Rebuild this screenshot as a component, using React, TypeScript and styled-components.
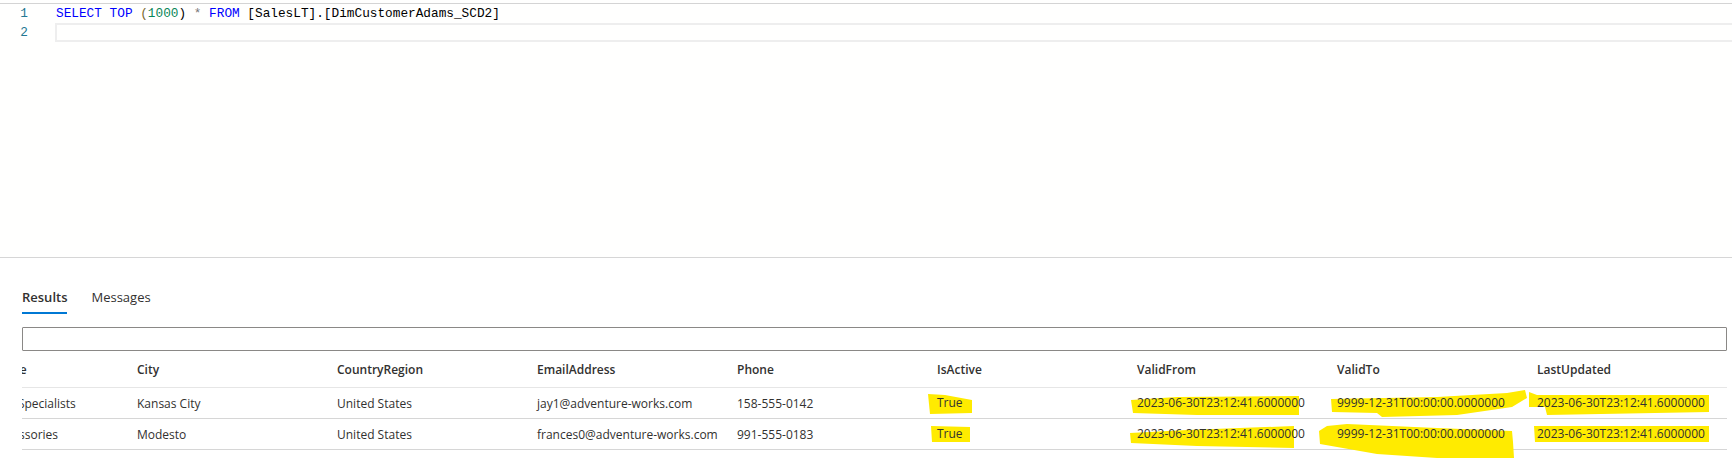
import React from "react";
import styled, { createGlobalStyle } from "styled-components";

const GlobalStyle = createGlobalStyle`
  html, body { margin: 0; padding: 0; background: #ffffff; }
  body { font-family: "Open Sans", "Noto Sans", "Liberation Sans", sans-serif; color: #323130; overflow: hidden; }
`;

const Page = styled.div`
  width: 1732px;
  height: 458px;
  display: flex;
  flex-direction: column;
  background: #ffffff;
`;

/* ---------- Editor ---------- */
const Editor = styled.div`
  height: 257px;
  padding-top: 3px;
  box-sizing: border-box;
  background: #fffffe;
  display: flex;
  flex-direction: column;
`;

const EditorRule = styled.div`
  height: 1px;
  background: #d4d4d4;
`;

const CodeLine = styled.div`
  display: flex;
  height: 19px;
  align-items: stretch;
`;

const LineNo = styled.div`
  width: 55px;
  box-sizing: border-box;
  padding-right: 27px;
  text-align: right;
  font-family: "Liberation Mono", "DejaVu Sans Mono", monospace;
  font-size: 12.75px;
  line-height: 19px;
  color: #237893;
`;

const CodeText = styled.div<{ $current?: boolean }>`
  flex: 1;
  box-sizing: border-box;
  padding-left: 1px;
  font-family: "Liberation Mono", "DejaVu Sans Mono", monospace;
  font-size: 12.75px;
  line-height: ${(p) => (p.$current ? "15px" : "19px")};
  white-space: pre;
  color: #000000;
  border: ${(p) => (p.$current ? "2px solid #eeeeee" : "none")};
  border-right: none;
`;

const Tok = styled.span<{ $kind: "kw" | "num" | "op" | "paren" | "plain" }>`
  color: ${(p) =>
    p.$kind === "kw"
      ? "#0000ff"
      : p.$kind === "num"
      ? "#098658"
      : p.$kind === "op"
      ? "#777777"
      : p.$kind === "paren"
      ? "#7a6a2e"
      : "#000000"};
`;

const Divider = styled.div`
  height: 1px;
  background: #d6d6d6;
`;

/* ---------- Results ---------- */
const Results = styled.div`
  flex: 1;
  display: flex;
  flex-direction: column;
  padding-left: 22px;
  padding-right: 5px;
  min-height: 0;
`;

const Tabs = styled.div`
  display: flex;
  gap: 24px;
  margin-top: 30px;
`;

const Tab = styled.div<{ $active?: boolean }>`
  font-size: 13px;
  line-height: 18px;
  font-weight: ${(p) => (p.$active ? 600 : 400)};
  color: #323130;
  padding-bottom: 6px;
  border-bottom: 2px solid ${(p) => (p.$active ? "#0078d4" : "transparent")};
`;

const FilterBox = styled.div`
  margin-top: 13px;
  height: 24px;
  box-sizing: border-box;
  border: 1px solid #8a8886;
  border-radius: 1px;
`;

const GridViewport = styled.div`
  overflow-x: clip;
  overflow-y: visible;
`;

const GridInner = styled.div`
  margin-left: -93px;
  width: 1800px;
`;

const Row = styled.div<{ $header?: boolean }>`
  display: grid;
  grid-template-columns: repeat(9, 200px);
  height: ${(p) => (p.$header ? "37px" : "31px")};
  box-sizing: border-box;
  border-bottom: 1px solid ${(p) => (p.$header ? "#e6e6e6" : "#d6d6d6")};
`;

const Cell = styled.div<{ $header?: boolean }>`
  display: flex;
  align-items: center;
  padding-left: 8px;
  white-space: pre;
  font-size: 12px;
  font-weight: ${(p) => (p.$header ? 600 : 400)};
  color: #323130;
  position: relative;
`;

const Mark = styled.span`
  position: relative;
  display: inline-block;
  isolation: isolate;
  line-height: 16px;
`;

const MarkShape = styled.svg`
  position: absolute;
  left: 0;
  top: 50%;
  width: 1px;
  height: 1px;
  overflow: visible;
  z-index: -1;
  pointer-events: none;
`;

type Pt = [number, number];

const Highlight: React.FC<{ pts: Pt[]; children: React.ReactNode }> = ({ pts, children }) => (
  <Mark>
    <MarkShape>
      <polygon points={pts.map((p) => p.join(",")).join(" ")} fill="#ffeb00" />
    </MarkShape>
    {children}
  </Mark>
);

const headers = [
  "CompanyName",
  "City",
  "CountryRegion",
  "EmailAddress",
  "Phone",
  "IsActive",
  "ValidFrom",
  "ValidTo",
  "LastUpdated",
];

type RowData = {
  company: string;
  city: string;
  country: string;
  email: string;
  phone: string;
  marks: { active: Pt[]; from: Pt[]; to: Pt[]; updated: Pt[] };
};

const rows: RowData[] = [
  {
    company: "Valley Bicycle\u2009\u2009 Specialists",
    city: "Kansas City",
    country: "United States",
    email: "jay1@adventure-works.com",
    phone: "158-555-0142",
    marks: {
      active: [[-9, -9], [8, -8], [35, -3], [35, 10], [-7, 11]],
      from: [[-6, -3], [40, -6], [162, -7], [162, 12], [60, 12], [-4, 10]],
      to: [[-6, -4], [100, -6], [170, -10], [188, -13], [190, -5], [175, 4], [120, 12], [45, 14], [40, 10], [-5, 9]],
      updated: [[-8, -11], [0, -8], [172, -8], [172, 9], [10, 12], [8, 4], [-8, 4]],
    },
  },
  {
    company: "Tour Bike Accessories",
    city: "Modesto",
    country: "United States",
    email: "frances0@adventure-works.com",
    phone: "991-555-0183",
    marks: {
      active: [[-6, -8], [33, -7], [33, 8], [-5, 8]],
      from: [[-7, -1], [50, -4], [157, -8], [157, 14], [60, 12], [-6, 9]],
      to: [[-18, -3], [-10, -8], [10, -10], [100, -6], [175, -3], [176, 8], [177, 24], [100, 24], [40, 20], [-17, 10]],
      updated: [[-3, -8], [172, -8], [172, 8], [-2, 8]],
    },
  },
];

const VALID_FROM = "2023-06-30T23:12:41.6000000";
const VALID_TO = "9999-12-31T00:00:00.0000000";

export default function App() {
  return (
    <Page>
      <GlobalStyle />
      <Editor>
        <EditorRule />
        <CodeLine>
          <LineNo>1</LineNo>
          <CodeText>
            <Tok $kind="kw">SELECT</Tok> <Tok $kind="kw">TOP</Tok> <Tok $kind="paren">(</Tok>
            <Tok $kind="num">1000</Tok>
            <Tok $kind="plain">)</Tok> <Tok $kind="op">*</Tok> <Tok $kind="kw">FROM</Tok>{" "}
            <Tok $kind="plain">[SalesLT].[DimCustomerAdams_SCD2]</Tok>
          </CodeText>
        </CodeLine>
        <CodeLine>
          <LineNo>2</LineNo>
          <CodeText $current />
        </CodeLine>
      </Editor>
      <Divider />
      <Results>
        <Tabs>
          <Tab $active>Results</Tab>
          <Tab>Messages</Tab>
        </Tabs>
        <FilterBox />
        <GridViewport>
          <GridInner>
            <Row $header>
              {headers.map((h) => (
                <Cell $header key={h}>
                  {h}
                </Cell>
              ))}
            </Row>
            {rows.map((r) => (
              <Row key={r.email}>
                <Cell>{r.company}</Cell>
                <Cell>{r.city}</Cell>
                <Cell>{r.country}</Cell>
                <Cell>{r.email}</Cell>
                <Cell>{r.phone}</Cell>
                <Cell>
                  <Highlight pts={r.marks.active}>True</Highlight>
                </Cell>
                <Cell>
                  <Highlight pts={r.marks.from}>{VALID_FROM}</Highlight>
                </Cell>
                <Cell>
                  <Highlight pts={r.marks.to}>{VALID_TO}</Highlight>
                </Cell>
                <Cell>
                  <Highlight pts={r.marks.updated}>{VALID_FROM}</Highlight>
                </Cell>
              </Row>
            ))}
          </GridInner>
        </GridViewport>
      </Results>
    </Page>
  );
}
